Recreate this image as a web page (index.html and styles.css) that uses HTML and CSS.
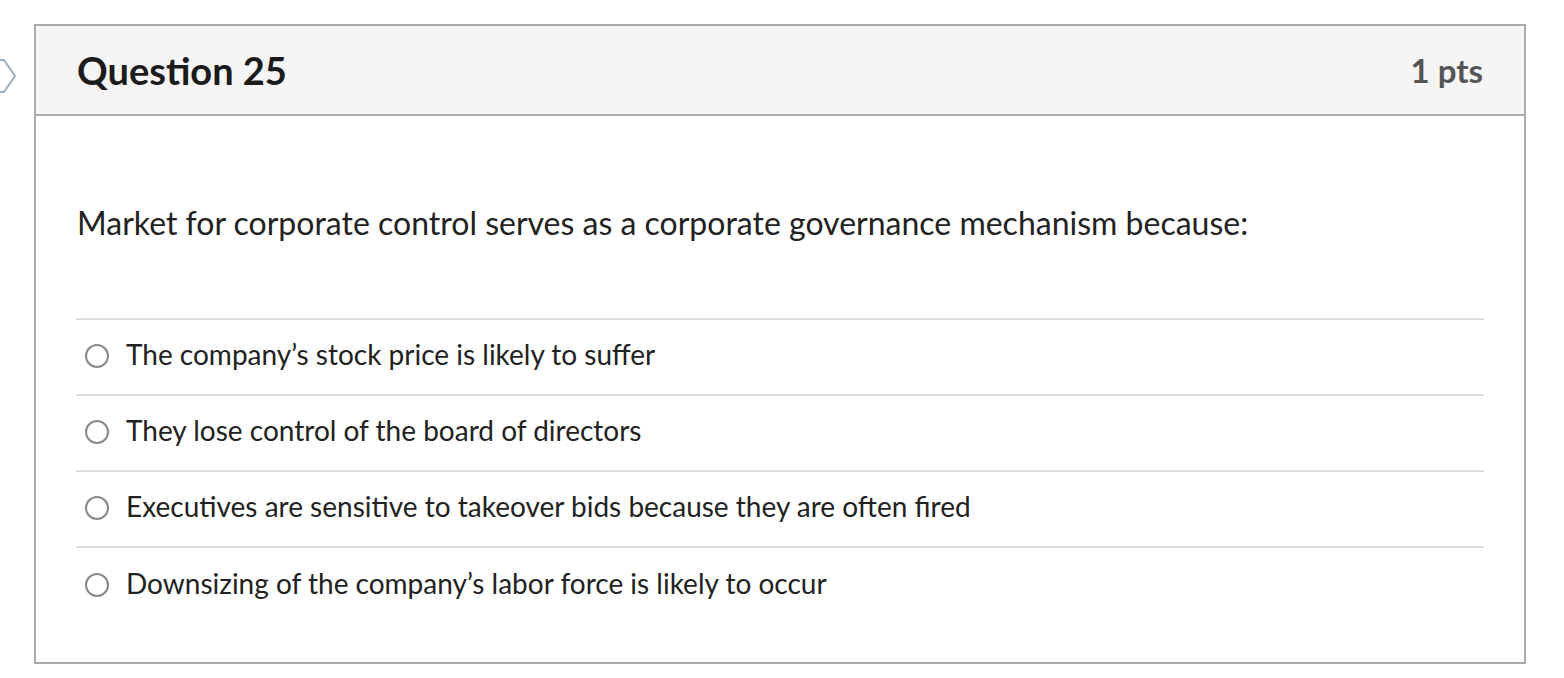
FILE: index.html
```html
<!DOCTYPE html>
<html>
<head>
<meta charset="utf-8">
<link rel="stylesheet" href="styles.css">
</head>
<body>
<div class="page">
  <div class="nav">
    <svg class="chev" width="18" height="36" viewBox="0 0 18 36">
      <path d="M-4 2 H4 L15 18 L4 34 H-4" fill="#ffffff" stroke="#9fb3c6" stroke-width="2.2" stroke-linejoin="round"/>
    </svg>
  </div>
  <div class="question">
    <div class="qheader">
      <h2 class="qtitle">Question 25</h2>
      <span class="pts">1 pts</span>
    </div>
    <div class="qbody">
      <p class="qtext">Market for corporate control serves as a corporate governance mechanism because:</p>
      <div class="answers">
        <label class="answer"><span class="radio"></span><span class="atext">The company’s stock price is likely to suffer</span></label>
        <label class="answer"><span class="radio"></span><span class="atext">They lose control of the board of directors</span></label>
        <label class="answer"><span class="radio"></span><span class="atext">Executives are sensitive to takeover bids because they are often fired</span></label>
        <label class="answer"><span class="radio"></span><span class="atext">Downsizing of the company’s labor force is likely to occur</span></label>
      </div>
    </div>
  </div>
</div>
</body>
</html>
```

FILE: styles.css
```css
* { box-sizing: border-box; }
html, body { margin: 0; padding: 0; background: #fff; }
body {
  font-family: Lato, "Open Sans", sans-serif;
  color: #222;
}
.page {
  display: flex;
  padding-top: 24px;
}
.nav {
  width: 34px;
  flex: none;
  padding-top: 34px;
}
.chev { display: block; }
.question {
  width: 1492px;
  height: 640px;
  border: 2px solid #aaaaaa;
}
.qheader {
  height: 90px;
  background: #f5f5f5;
  border-bottom: 2px solid #aaaaaa;
  display: flex;
  align-items: center;
  justify-content: space-between;
  padding: 0 41px 0 41px;
}
.qtitle {
  margin: 0;
  font-size: 38px;
  line-height: 44px;
  font-weight: 700;
  color: #1b1b1b;
}
.pts {
  font-size: 33px;
  line-height: 44px;
  font-weight: 700;
  color: #555;
}
.qbody {
  padding: 0 40px;
}
.qtext {
  margin: 0;
  padding: 87px 0 0 1px;
  height: 202px;
  font-size: 32px;
  line-height: 40px;
  color: #222;
}
.answers {
  border-top: 2px solid #dddddd;
}
.answer {
  display: flex;
  align-items: center;
  height: 76px;
  border-bottom: 2px solid #dddddd;
  padding-left: 9px;
  padding-bottom: 6px;
  font-size: 28px;
}
.answer:last-child { border-bottom: none; }
.radio {
  width: 24px;
  height: 24px;
  margin-top: 4px;
  border: 2px solid #888888;
  border-radius: 50%;
  flex: none;
  margin-right: 17px;
}
.atext { color: #222; }
```
